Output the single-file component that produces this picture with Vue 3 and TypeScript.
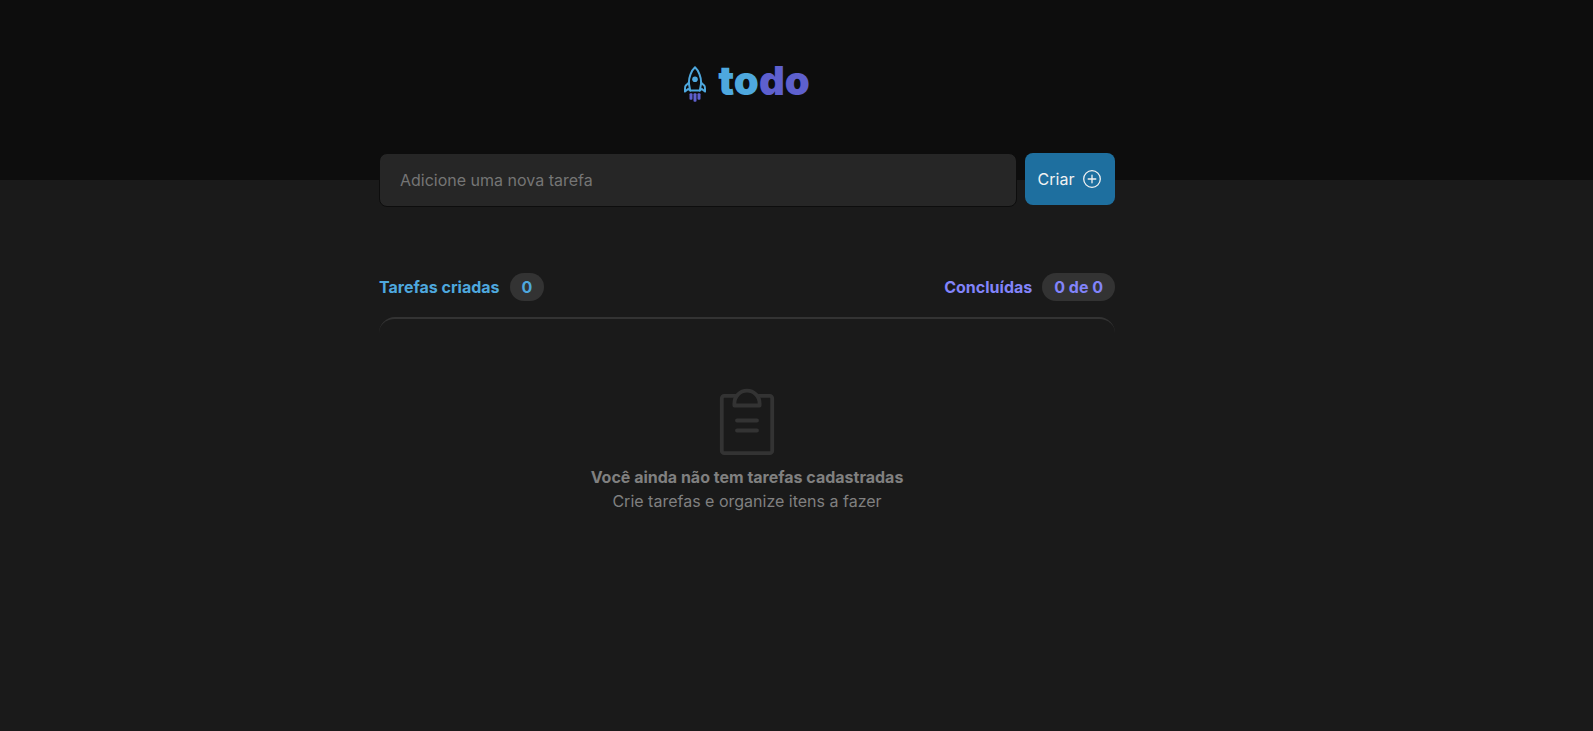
<script setup lang="ts">
import { computed, ref } from 'vue'

interface Task {
  id: number
  title: string
  done: boolean
}

const tasks = ref<Task[]>([])
const title = ref('')
const doneCount = computed(() => tasks.value.filter((task) => task.done).length)

function createTask() {
  const text = title.value.trim()
  if (!text) return
  tasks.value.push({ id: Date.now(), title: text, done: false })
  title.value = ''
}
</script>

<template>
  <div class="page">
    <header class="header">
      <h1 class="logo">
        <svg class="rocket" width="22" height="36" viewBox="0 0 22 36" fill="none" aria-hidden="true">
          <path d="M6.200 24.600L4.900 17.500C4.600 11.200 7.400 4.600 11 1.300C14.600 4.600 17.400 11.200 17.100 17.500L15.800 24.600Z" stroke="#4EA8DE" stroke-width="2" stroke-linejoin="round" />
          <path d="M4.900 16.600L1.600 19.800C.9 20.500 .9 23 1 25.600L4.200 22.900L6.200 24.600M17.100 16.600L20.400 19.800C21.100 20.500 21.100 23 21 25.600L17.800 22.900L15.800 24.600" stroke="#4EA8DE" stroke-width="2" stroke-linejoin="round" stroke-linecap="round" />
          <circle cx="11" cy="13.300" r="2.800" fill="#4EA8DE" />
          <rect x="5.500" y="27.300" width="3" height="6.500" rx="1" fill="#5E60CE" />
          <rect x="9.500" y="27.300" width="3" height="8.500" rx="1" fill="#5E60CE" />
          <rect x="13.500" y="27.300" width="3" height="6.500" rx="1" fill="#5E60CE" />
        </svg>
        <span class="word"><span class="to">to</span><span class="do">do</span></span>
      </h1>
    </header>

    <main class="content">
      <form class="form" @submit.prevent="createTask">
        <input v-model="title" class="field" type="text" placeholder="Adicione uma nova tarefa" aria-label="Adicione uma nova tarefa" />
        <button class="create" type="submit">
          Criar
          <svg width="20" height="20" viewBox="0 0 20 20" fill="none" stroke="currentColor" stroke-width="1.300" stroke-linecap="round" aria-hidden="true">
            <circle cx="10" cy="10" r="8.300" />
            <path d="M6.200 10H13.800M10 6.200V13.800" />
          </svg>
        </button>
      </form>

      <div class="summary">
        <p class="count created">Tarefas criadas <span class="badge">{{ tasks.length }}</span></p>
        <p class="count finished">Concluídas <span class="badge">{{ doneCount }} de {{ tasks.length }}</span></p>
      </div>

      <section class="list">
        <div v-if="tasks.length === 0" class="empty">
          <svg width="56" height="68" viewBox="0 0 56 68" fill="none" stroke="#333333" stroke-width="3.800" stroke-linecap="round" stroke-linejoin="round" aria-hidden="true">
            <path d="M17 7.800H5.300A2.500 2.500 0 0 0 2.800 10.300V62.700A2.500 2.500 0 0 0 5.300 65.200H50.700A2.500 2.500 0 0 0 53.200 62.700V10.300A2.500 2.500 0 0 0 50.700 7.800H39" />
            <path d="M15.400 17.500V15.200A12.600 12.600 0 0 1 40.600 15.200V17.500Z" />
            <path d="M18 32.500H38M18 42.500H38" />
          </svg>
          <strong>Você ainda não tem tarefas cadastradas</strong>
          <span>Crie tarefas e organize itens a fazer</span>
        </div>
        <ul v-else class="tasks">
          <li v-for="task in tasks" :key="task.id">
            <label><input v-model="task.done" type="checkbox" /> {{ task.title }}</label>
          </li>
        </ul>
      </section>
    </main>
  </div>
</template>

<style>
body {
  margin: 0;
  background: #1a1a1a;
}
</style>

<style scoped>
.page {
  min-height: 100vh;
  background: #1a1a1a;
  color: #808080;
  font: 400 16px/24px Inter, sans-serif;
}

.header,
.content {
  box-sizing: border-box;
  padding-right: 99px;
}

.header {
  height: 180px;
  padding-top: 60px;
  background: #0d0d0d;
}

.logo {
  display: flex;
  align-items: center;
  justify-content: center;
  gap: 12px;
  height: 48px;
  margin: 0;
}

.word {
  font-size: 40px;
  font-weight: 900;
  line-height: 48px;
  padding-bottom: 6px;
}

.to {
  color: #4ea8de;
}

.do {
  color: #5e60ce;
}

.form,
.summary,
.list {
  width: 100%;
  max-width: 736px;
  margin: 0 auto;
}

.form {
  display: flex;
  align-items: flex-start;
  gap: 8px;
  margin-top: -27px;
}

.field {
  flex: 1;
  box-sizing: border-box;
  min-width: 0;
  height: 54px;
  padding: 0 20px;
  border: 1px solid #0d0d0d;
  border-radius: 8px;
  background: #262626;
  color: #f2f2f2;
  font: inherit;
}

.field::placeholder {
  color: #757575;
  opacity: 1;
}

.create {
  display: flex;
  align-items: center;
  justify-content: center;
  gap: 8px;
  width: 90px;
  height: 52px;
  padding: 0;
  border: 0;
  border-radius: 8px;
  background: #1e6f9f;
  color: #f2f2f2;
  font: inherit;
  cursor: pointer;
}

.summary {
  display: flex;
  justify-content: space-between;
  margin-top: 66px;
}

.count {
  display: flex;
  align-items: center;
  gap: 10px;
  margin: 0;
  font-weight: 700;
}

.created {
  color: #4ea8de;
}

.finished {
  color: #8284fa;
}

.badge {
  padding: 2px 12px;
  border-radius: 14px;
  background: #333333;
}

.list {
  box-sizing: border-box;
  margin-top: 16px;
  border-top: 2px solid #333333;
  border-radius: 16px;
}

.empty {
  display: flex;
  flex-direction: column;
  align-items: center;
  padding: 69px 16px;
}

.empty svg {
  margin-bottom: 9px;
}

.tasks {
  margin: 0;
  padding: 24px;
  list-style: none;
}
</style>
